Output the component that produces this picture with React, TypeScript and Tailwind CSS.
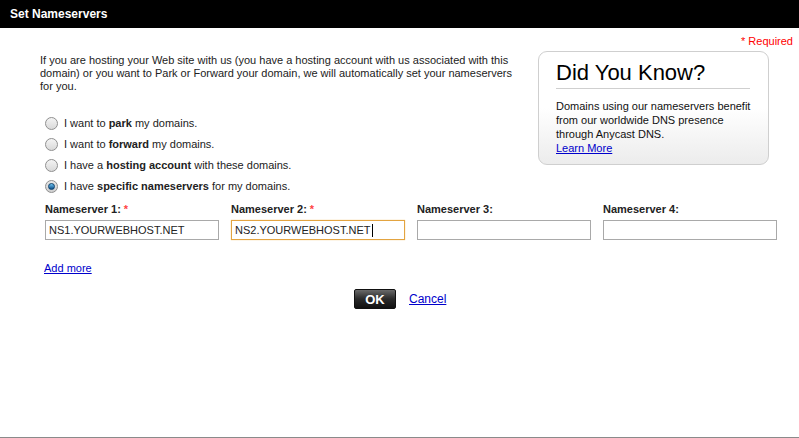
import React from 'react';

const font = { fontFamily: '"Liberation Sans", Arial, sans-serif' };

const Radio = ({ checked }: { checked?: boolean }) => (
  <span
    className={`inline-flex w-[13px] h-[13px] rounded-full border border-[#8f8f8f] items-center justify-center shrink-0 ${
      checked ? 'bg-gradient-to-b from-[#e8e8e8] to-[#cfcfcf]' : 'bg-gradient-to-b from-[#f4f4f4] to-[#d9d9d9]'
    }`}
  >
    {checked && (
      <span className="w-[7px] h-[7px] rounded-full bg-gradient-to-b from-[#6fc4f0] to-[#0a4f8a] border border-[#0b3f6b]" />
    )}
  </span>
);

const options = [
  { pre: 'I want to ', bold: 'park', post: ' my domains.' },
  { pre: 'I want to ', bold: 'forward', post: ' my domains.' },
  { pre: 'I have a ', bold: 'hosting account', post: ' with these domains.' },
  { pre: 'I have ', bold: 'specific nameservers', post: ' for my domains.', checked: true },
];

const servers = [
  { label: 'Nameserver 1:', req: true, value: 'NS1.YOURWEBHOST.NET' },
  { label: 'Nameserver 2:', req: true, value: 'NS2.YOURWEBHOST.NET', focus: true },
  { label: 'Nameserver 3:', value: '' },
  { label: 'Nameserver 4:', value: '' },
];

export default function App() {
  return (
    <div className="w-[799px] h-[438px] bg-white flex flex-col text-[11px] text-[#222]" style={font}>
      <div className="h-[28px] bg-black flex items-center px-[10px]">
        <span className="text-white font-bold text-[12px]">Set Nameservers</span>
      </div>

      <div className="flex-1 flex flex-col relative">
        <div className="flex justify-end pr-[6px] pt-[6px] h-[20px]">
          <span className="text-[#f00] text-[11px] leading-[14px]">* Required</span>
        </div>

        <div className="flex">
          <div className="w-[498px] ml-[40px] pt-[6px]">
            <p className="leading-[13px] w-[480px]">
              If you are hosting your Web site with us (you have a hosting account with us associated with this
              domain) or you want to Park or Forward your domain, we will automatically set your nameservers
              for you.
            </p>

            <div className="flex flex-col gap-[8px] mt-[24px] ml-[5px]">
              {options.map((o, i) => (
                <label key={i} className="flex items-center gap-[6px] h-[13px] leading-[13px]">
                  <Radio checked={o.checked} />
                  <span>
                    {o.pre}
                    <b>{o.bold}</b>
                    {o.post}
                  </span>
                </label>
              ))}
            </div>
          </div>

          <div className="w-[231px] h-[114px] mt-[3px] rounded-[9px] border border-[#cfcfcf] bg-gradient-to-b from-white via-white to-[#ececec] px-[17px] pt-[8px]">
            <div className="text-[22px] leading-[26px] text-black border-b border-[#cfcfcf] pb-[2px] w-[194px]">
              Did You Know?
            </div>
            <p className="mt-[10px] leading-[14px] text-[#111]">
              Domains using our nameservers benefit
              <br />
              from our worldwide DNS presence
              <br />
              through Anycast DNS.
              <br />
              <a href="#" className="text-[#00c] underline">Learn More</a>
            </p>
          </div>
        </div>

        <div className="flex ml-[45px] mt-[8px] gap-[12px]">
          {servers.map((s, i) => (
            <div key={i} className="flex flex-col w-[174px]">
              <div className="font-bold text-[#222] leading-[13px] mt-[2px]">
                {s.label}
                {s.req && <span className="text-[#f44] ml-[3px]">*</span>}
              </div>
              <div
                className={`mt-[4px] h-[20px] border flex items-center px-[3px] text-[11px] text-[#222] bg-white ${
                  s.focus ? 'border-[#e3a441] shadow-[0_0_1px_#f0c070]' : 'border-[#a9a9a9]'
                }`}
              >
                {s.value}
                {s.focus && <span className="w-px h-[13px] bg-black ml-[1px]" />}
              </div>
            </div>
          ))}
        </div>

        <div className="ml-[44px] mt-[22px] leading-[13px]">
          <a href="#" className="text-[#00c] underline">Add more</a>
        </div>

        <div className="flex items-center ml-[354px] mt-[14px] gap-[13px]">
          <button className="w-[42px] h-[20px] rounded-[2px] border border-[#111] bg-gradient-to-b from-[#6a6a6a] via-[#2a2a2a] to-[#111] text-white font-bold text-[13px] leading-none">
            OK
          </button>
          <a href="#" className="text-[#00c] underline text-[12px]">Cancel</a>
        </div>

        <div className="absolute bottom-0 left-0 right-0 h-px bg-[#8a8a8a]" />
      </div>
    </div>
  );
}
